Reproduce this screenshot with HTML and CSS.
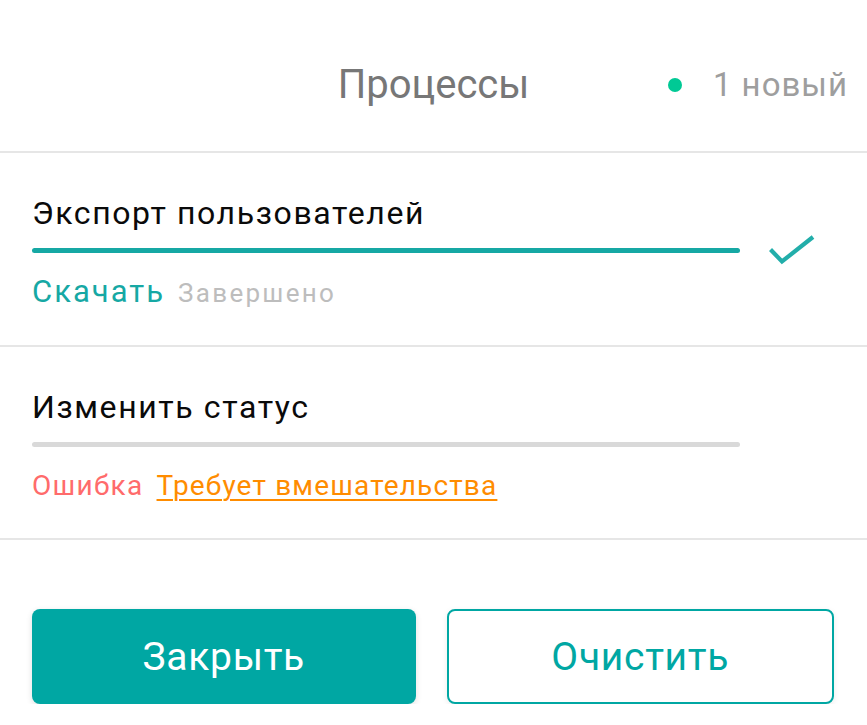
FILE: index.html
```html
<!DOCTYPE html>
<html lang="ru">
<head>
<meta charset="utf-8">
<title>Процессы</title>
<link rel="stylesheet" href="styles.css">
</head>
<body>
<div class="panel">
  <header class="header">
    <div class="header-spacer"></div>
    <h1 class="title">Процессы</h1>
    <div class="badge"><span class="dot"></span><span class="badge-text">1 новый</span></div>
  </header>

  <section class="item">
    <div class="item-title">Экспорт пользователей</div>
    <div class="progress-row">
      <div class="bar bar-done"></div>
      <div class="icon-cell">
        <svg class="check" width="48" height="34" viewBox="0 0 48 34">
          <polyline points="1.5,15.5 13,27.5 44,3" fill="none" stroke="#22aeaa" stroke-width="4.2"/>
        </svg>
      </div>
    </div>
    <div class="sub">
      <a class="link-teal" href="#">Скачать</a>
      <span class="muted">Завершено</span>
    </div>
  </section>

  <section class="item">
    <div class="item-title">Изменить статус</div>
    <div class="progress-row">
      <div class="bar bar-empty"></div>
      <div class="icon-cell"></div>
    </div>
    <div class="sub">
      <span class="error">Ошибка</span>
      <a class="link-orange" href="#">Требует вмешательства</a>
    </div>
  </section>

  <footer class="actions">
    <button class="btn btn-primary">Закрыть</button>
    <button class="btn btn-outline">Очистить</button>
  </footer>
</div>
</body>
</html>
```

FILE: styles.css
```css
html, body {
  margin: 0;
  padding: 0;
  background: #ffffff;
}

body {
  font-family: Roboto, "Noto Sans", "Liberation Sans", sans-serif;
  color: #000;
}

.panel {
  width: 867px;
}

.header {
  display: grid;
  grid-template-columns: 1fr auto 1fr;
  align-items: center;
  height: 151px;
  border-bottom: 2px solid #e6e6e6;
  padding: 0 19px;
}

.title {
  margin: 0;
  font-weight: 400;
  font-size: 40px;
  line-height: 48px;
  color: #777777;
  padding-top: 18px;
}

.badge {
  justify-self: end;
  display: flex;
  align-items: center;
  gap: 31px;
  padding-top: 18px;
}

.dot {
  width: 14px;
  height: 14px;
  border-radius: 50%;
  background: #00c995;
}

.badge-text {
  font-size: 33px;
  line-height: 40px;
  letter-spacing: 1px;
  color: #9e9e9e;
}

.item {
  padding: 40px 50px 34px 32px;
  border-bottom: 2px solid #e6e6e6;
}

.item-title {
  font-size: 32px;
  line-height: 40px;
  letter-spacing: 1.6px;
  color: #0a0a0a;
}

.progress-row {
  display: flex;
  align-items: center;
  gap: 29px;
  height: 5px;
  margin-top: 15px;
}

.bar {
  flex: 1;
  height: 5px;
  border-radius: 3px;
}

.bar-done {
  background: #16a8a4;
}

.bar-empty {
  background: #d9d9d9;
}

.icon-cell {
  width: 48px;
  height: 5px;
  display: flex;
  align-items: center;
}

.check {
  display: block;
  flex: none;
}

.sub {
  margin-top: 21px;
  line-height: 36px;
  display: flex;
  align-items: baseline;
  gap: 13px;
}

.link-teal {
  font-size: 31px;
  letter-spacing: 2px;
  color: #16a8a4;
  text-decoration: none;
}

.muted {
  font-size: 26px;
  letter-spacing: 2.3px;
  color: #bdbdbd;
}

.error {
  font-size: 28px;
  letter-spacing: 1.3px;
  color: #ff6b6b;
}

.link-orange {
  font-size: 28px;
  letter-spacing: 1.15px;
  color: #ff8c00;
  text-decoration: underline;
  text-decoration-thickness: 2px;
  text-underline-offset: 4px;
}

.actions {
  display: flex;
  gap: 31px;
  padding: 69px 33px 0 32px;
}

.btn {
  flex: 1;
  height: 95px;
  border-radius: 8px;
  font-family: Roboto, "Noto Sans", "Liberation Sans", sans-serif;
  font-size: 39px;
  letter-spacing: 0.7px;
  cursor: pointer;
}

.btn-primary {
  background: #00a7a3;
  color: #ffffff;
  border: none;
  box-shadow: 0 2px 6px rgba(0, 0, 0, 0.12);
}

.btn-outline {
  background: #ffffff;
  color: #00a7a3;
  border: 2px solid #00a7a3;
  box-shadow: 0 2px 6px rgba(0, 0, 0, 0.08);
}
```
